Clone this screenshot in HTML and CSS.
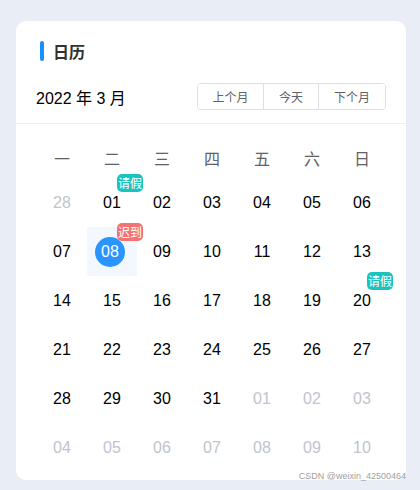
FILE: index.html
```html
<!DOCTYPE html>
<html lang="zh">
<head>
<meta charset="utf-8">
<link rel="stylesheet" href="styles.css">
</head>
<body>
<div class="card">
  <div class="head">
    <div class="title"><span class="bar"></span><span>日历</span></div>
    <div class="toolbar">
      <div class="month">2022 年 3 月</div>
      <div class="btns">
        <button class="b1">上个月</button>
        <button class="b2">今天</button>
        <button class="b3">下个月</button>
      </div>
    </div>
  </div>
  <div class="grid">
    <div class="wd">一</div><div class="wd">二</div><div class="wd">三</div><div class="wd">四</div><div class="wd">五</div><div class="wd">六</div><div class="wd">日</div>

    <div class="d other">28</div>
    <div class="d">01<span class="tag leave">请假</span></div>
    <div class="d">02</div><div class="d">03</div><div class="d">04</div><div class="d">05</div><div class="d">06</div>

    <div class="d">07</div>
    <div class="d sel"><span class="circle">08</span><span class="tag late">迟到</span></div>
    <div class="d">09</div><div class="d">10</div><div class="d">11</div><div class="d">12</div><div class="d">13</div>

    <div class="d">14</div><div class="d">15</div><div class="d">16</div><div class="d">17</div><div class="d">18</div><div class="d">19</div>
    <div class="d">20<span class="tag leave">请假</span></div>

    <div class="d">21</div><div class="d">22</div><div class="d">23</div><div class="d">24</div><div class="d">25</div><div class="d">26</div><div class="d">27</div>

    <div class="d">28</div><div class="d">29</div><div class="d">30</div><div class="d">31</div>
    <div class="d other">01</div><div class="d other">02</div><div class="d other">03</div>

    <div class="d other">04</div><div class="d other">05</div><div class="d other">06</div><div class="d other">07</div><div class="d other">08</div><div class="d other">09</div><div class="d other">10</div>
  </div>
</div>
<div class="mark">CSDN @weixin_42500464</div>
</body>
</html>
```
FILE: styles.css
```css
html, body {
  margin: 0;
  padding: 0;
  background: #e9edf5;
  font-family: "Liberation Sans", "Noto Sans CJK SC", sans-serif;
}
body {
  width: 420px;
  height: 490px;
  position: relative;
  overflow: hidden;
}
.card {
  margin: 21px 0 0 16px;
  width: 390px;
  height: 459px;
  background: #fff;
  border-radius: 10px;
  box-sizing: border-box;
}
.head {
  padding: 20px 20px 13px 20px;
  border-bottom: 1px solid #ebeef5;
}
.title {
  display: flex;
  align-items: center;
  height: 20px;
  margin-left: 4px;
  font-size: 16px;
  font-weight: bold;
  color: #303133;
}
.bar {
  width: 4px;
  height: 20px;
  background: #1890ff;
  border-radius: 2px;
  margin-right: 9px;
}
.toolbar {
  display: flex;
  justify-content: space-between;
  align-items: center;
  margin-top: 22px;
  height: 27px;
}
.month {
  font-size: 16px;
  color: #000;
}
.btns {
  display: flex;
  height: 27px;
  border: 1px solid #dcdfe6;
  border-radius: 4px;
  box-sizing: border-box;
  overflow: hidden;
}
.btns button {
  border: 0;
  background: #fff;
  font-family: "Liberation Sans", "Noto Sans CJK SC", sans-serif;
  font-size: 12px;
  color: #606266;
  padding: 0;
  height: 25px;
}
.btns .b1 { width: 66px; border-right: 1px solid #dcdfe6; }
.btns .b2 { width: 55px; border-right: 1px solid #dcdfe6; }
.btns .b3 { width: 66px; }
.grid {
  display: grid;
  grid-template-columns: repeat(7, 50px);
  grid-template-rows: 40px repeat(6, 49px);
  margin: 14px 0 0 21px;
}
.wd {
  display: flex;
  align-items: center;
  justify-content: center;
  font-size: 16px;
  color: #606266;
}
.d {
  position: relative;
  display: flex;
  align-items: center;
  justify-content: center;
  font-size: 16px;
  color: #000;
}
.d.other { color: #c0c4cc; }
.d.sel { background: #f2f8fe; }
.circle {
  width: 30px;
  height: 30px;
  border-radius: 50%;
  background: #2b95ff;
  color: #fff;
  display: flex;
  align-items: center;
  justify-content: center;
  margin-right: 4px;
}
.tag {
  position: absolute;
  top: -4px;
  right: -6px;
  height: 18px;
  line-height: 18px;
  padding: 0 1px;
  border-radius: 5px;
  font-size: 12px;
  color: #fff;
  font-family: "Noto Sans CJK SC", sans-serif;
}
.tag.leave { background: #19c3c0; }
.tag.late { background: #f47272; }
.mark {
  position: absolute;
  right: 14px;
  top: 471px;
  font-size: 9px;
  color: #a0a0a0;
  white-space: nowrap;
}
```
